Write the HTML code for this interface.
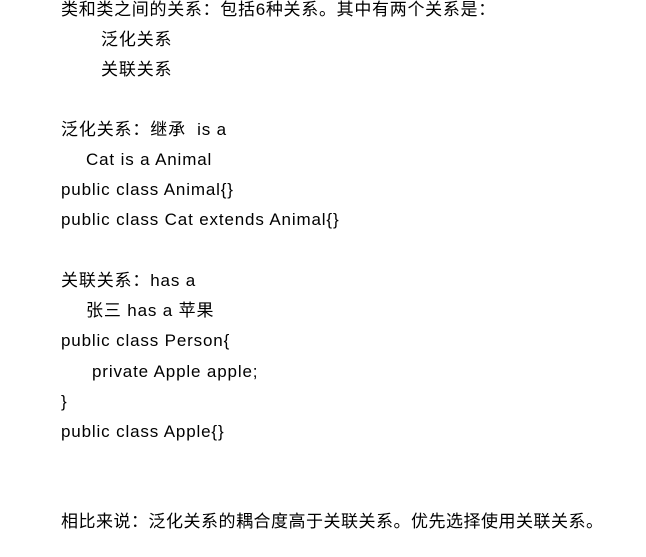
<!DOCTYPE html>
<html><head><meta charset="utf-8"><style>
body{margin:0;width:646px;height:557px;background:#fff;overflow:hidden;}
div{position:absolute;left:61px;height:30px;line-height:30px;font-family:"Liberation Sans","Noto Sans CJK SC",sans-serif;font-size:17px;letter-spacing:0.85px;color:#000;white-space:pre;}
</style></head><body>
<div style="top:-5px;letter-spacing:0.7px">类和类之间的关系：包括6种关系。其中有两个关系是：</div>
<div style="top:25px;left:101px">泛化关系</div>
<div style="top:55px;left:101px">关联关系</div>
<div style="top:115px">泛化关系：继承  is a</div>
<div style="top:145px;left:86px">Cat is a Animal</div>
<div style="top:175px">public class Animal{}</div>
<div style="top:205px">public class Cat extends Animal{}</div>
<div style="top:266px">关联关系：has a</div>
<div style="top:296px;left:86px">张三 has a 苹果</div>
<div style="top:326px">public class Person{</div>
<div style="top:357px;left:92px">private Apple apple;</div>
<div style="top:387px">}</div>
<div style="top:417px">public class Apple{}</div>
<div style="top:507px;letter-spacing:0.5px">相比来说：泛化关系的耦合度高于关联关系。优先选择使用关联关系。</div>
</body></html>
